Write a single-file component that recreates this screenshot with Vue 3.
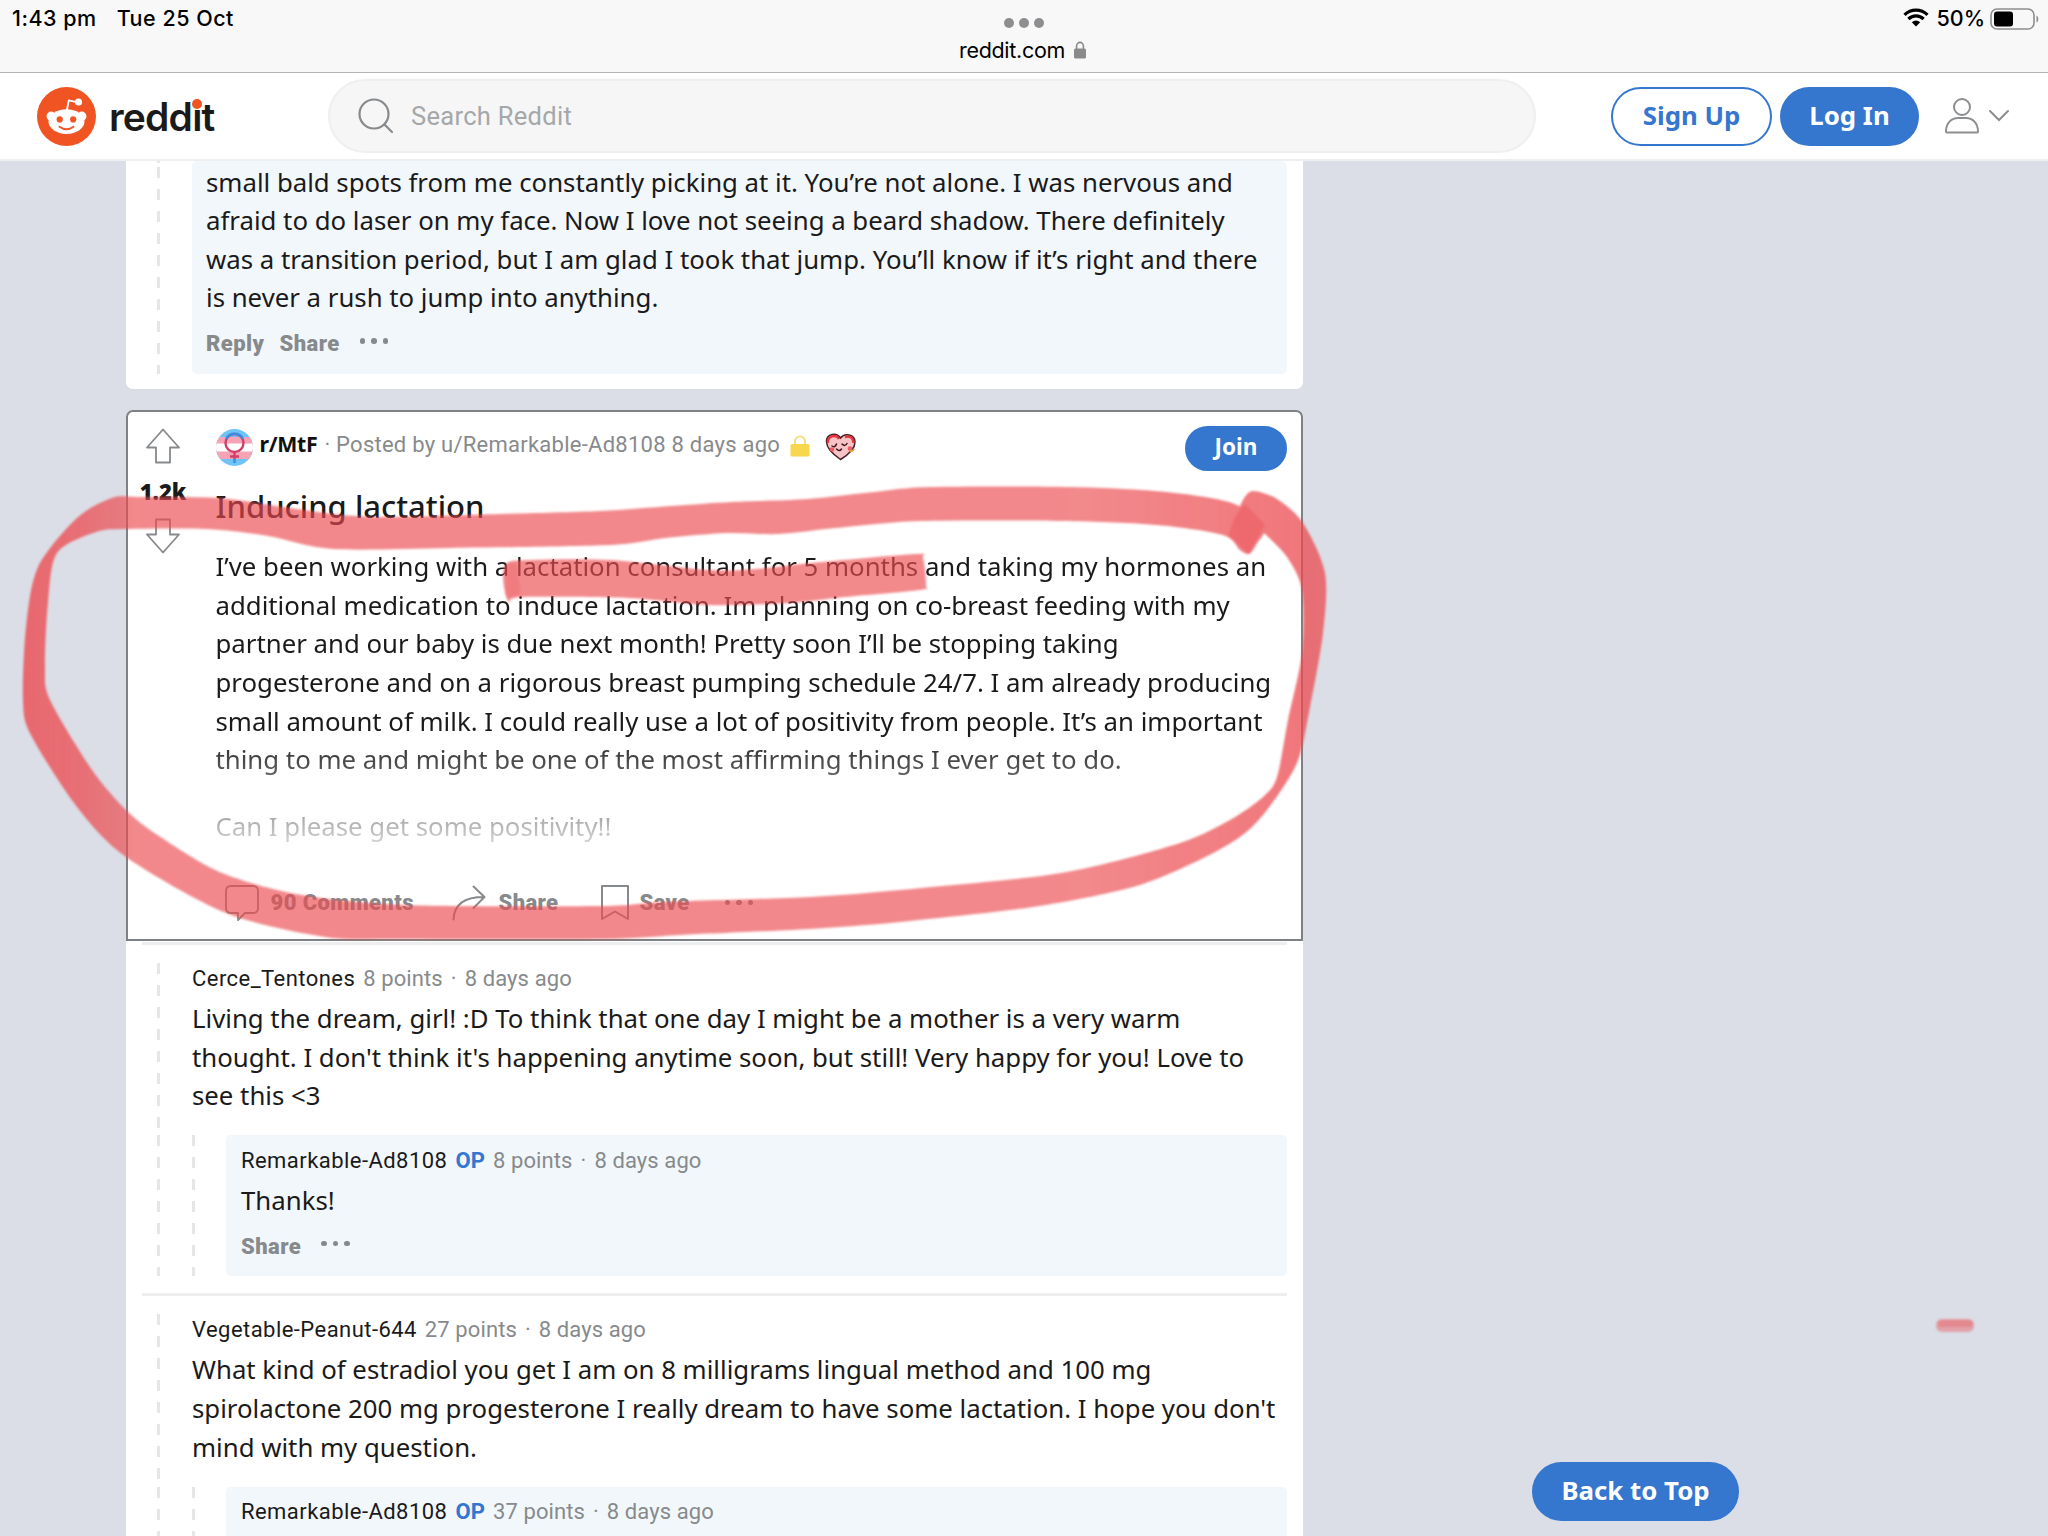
<script setup>
const topReply = [
  'small bald spots from me constantly picking at it. You’re not alone. I was nervous and',
  'afraid to do laser on my face. Now I love not seeing a beard shadow. There definitely',
  'was a transition period, but I am glad I took that jump. You’ll know if it’s right and there',
  'is never a rush to jump into anything.',
]

const postLines = [
  'I’ve been working with a lactation consultant for 5 months and taking my hormones an',
  'additional medication to induce lactation. Im planning on co-breast feeding with my',
  'partner and our baby is due next month! Pretty soon I’ll be stopping taking',
  'progesterone and on a rigorous breast pumping schedule 24/7. I am already producing',
  'small amount of milk. I could really use a lot of positivity from people. It’s an important',
  'thing to me and might be one of the most affirming things I ever get to do.',
]

const comments = [
  {
    author: 'Cerce_Tentones',
    points: '8 points',
    lines: [
      'Living the dream, girl! :D To think that one day I might be a mother is a very warm',
      "thought. I don't think it's happening anytime soon, but still! Very happy for you! Love to",
      'see this <3',
    ],
    reply: { points: '8 points', text: 'Thanks!' },
  },
  {
    author: 'Vegetable-Peanut-644',
    points: '27 points',
    lines: [
      'What kind of estradiol you get I am on 8 milligrams lingual method and 100 mg',
      "spirolactone 200 mg progesterone I really dream to have some lactation. I hope you don't",
      'mind with my question.',
    ],
    reply: { points: '37 points', text: '' },
  },
]

// marker strokes, as closed outlines in page coordinates
const loop = [
  [1265, 525], [1232, 503], [1166, 492], [1072, 487], [930, 487], [874, 492], [808, 499],
  [732, 502], [671, 506], [600, 511], [500, 514], [393, 517], [343, 515], [283, 507],
  [220, 498], [140, 497], [112, 498], [77, 518], [38, 567], [26, 627], [23, 700], [31, 735],
  [77, 807], [126, 857], [226, 913], [325, 937], [400, 939], [605, 939], [681, 935], [810, 929],
  [900, 922], [1033, 907], [1133, 887], [1193, 863], [1240, 837], [1267, 810], [1297, 763],
  [1310, 707], [1323, 633], [1325, 573], [1303, 523], [1277, 499], [1253, 491], [1243, 500],
  [1241, 512], [1264, 533], [1287, 557], [1302, 590], [1302, 653], [1288, 720], [1277, 777],
  [1263, 797], [1230, 820], [1183, 842], [1100, 865], [1033, 877], [900, 890], [810, 897],
  [663, 902], [601, 906], [405, 905], [302, 895], [222, 873], [159, 836], [126, 810],
  [92, 770], [50, 700], [45, 667], [48, 603], [57, 553], [96, 532], [126, 529], [207, 529],
  [268, 536], [333, 549], [450, 548], [610, 545], [666, 538], [727, 533], [779, 534],
  [836, 528], [921, 521], [1062, 521], [1157, 525], [1223, 535], [1240, 550], [1249, 554], [1256, 545],
]
const underline = [
  [507, 563], [530, 560], [610, 560], [708, 570], [756, 569], [812, 563], [915, 554],
  [923, 558], [926, 585], [920, 590], [845, 597], [789, 603], [708, 605], [628, 598],
  [520, 597], [510, 602], [506, 596], [503, 577],
]

// Catmull-Rom through the points, written out as cubic beziers
function smooth(points) {
  const n = points.length
  const at = (i) => points[(i + n) % n]
  let d = `M${points[0]}`
  for (let i = 0; i < n; i++) {
    const [p0, p1, p2, p3] = [at(i - 1), at(i), at(i + 1), at(i + 2)]
    const c1 = p1.map((v, k) => v + (p2[k] - p0[k]) / 7)
    const c2 = p2.map((v, k) => v - (p3[k] - p1[k]) / 7)
    d += `C${c1} ${c2} ${p2}`
  }
  return d + 'Z'
}
</script>

<template>
  <div class="page">
    <div class="status-bar">
      <div class="status-left"><span class="time">1:43 pm</span><span class="date">Tue 25 Oct</span></div>
      <div class="status-center">
        <div class="window-dots"><i></i><i></i><i></i></div>
        <div class="url">
          <span>reddit.com</span>
          <svg width="12" height="18" viewBox="0 0 12 18"><path d="M2.6 8V5a3.4 3.6 0 0 1 6.8 0v3" fill="none" stroke="#8a8a8a" stroke-width="1.6" /><rect y="7.5" width="12" height="10" rx="1.5" fill="#8a8a8a" /></svg>
        </div>
      </div>
      <div class="status-right">
        <svg width="26" height="19" viewBox="0 0 26 19">
          <path d="M1.5 6.8a16.5 16.5 0 0 1 23 0M5.4 11a10.8 10.8 0 0 1 15.2 0" fill="none" stroke="#000" stroke-width="3.2" />
          <path d="M8.8 14.3a6 6 0 0 1 8.4 0L13 18.6z" />
        </svg>
        <span class="percent">50%</span>
        <svg class="battery" width="49" height="22" viewBox="0 0 49 22">
          <rect x="1" y="1" width="43" height="20" rx="6" fill="none" stroke="#8d8d8d" stroke-width="1.6" />
          <rect x="4" y="3.5" width="19" height="15" rx="3" />
          <path d="M46.5 7.5c2.4 1 2.4 6 0 7z" fill="#8d8d8d" />
        </svg>
      </div>
    </div>

    <header class="header">
      <div class="logo">
        <svg width="59" height="59" viewBox="0 0 59 59">
          <circle cx="29.5" cy="29.5" r="29.5" fill="#f15423" />
          <path d="M29.5 25l2.3-11.6 9 2" fill="none" stroke="#fff" stroke-width="1.8" stroke-linejoin="round" />
          <circle cx="41.5" cy="15" r="3.6" fill="#fff" />
          <circle cx="14.2" cy="29.2" r="4.6" fill="#fff" />
          <circle cx="44.8" cy="29.2" r="4.6" fill="#fff" />
          <ellipse cx="29.5" cy="34.6" rx="18" ry="12.3" fill="#fff" />
          <circle cx="22.7" cy="32.4" r="3.1" fill="#f15423" />
          <circle cx="36.2" cy="32.4" r="3.1" fill="#f15423" />
          <path d="M22.5 39.8q7 5 14 0" fill="none" stroke="#f15423" stroke-width="2" stroke-linecap="round" />
        </svg>
        <span class="wordmark">redd<span class="dotted">i</span>t</span>
      </div>
      <div class="search">
        <svg width="38" height="38" viewBox="0 0 38 38" fill="none" stroke="#878a8c" stroke-width="2.2" stroke-linecap="round"><circle cx="17" cy="17" r="14.5" /><path d="M27.5 27.5L35 35" /></svg>
        <span>Search Reddit</span>
      </div>
      <div class="account">
        <button class="pill outline signup">Sign Up</button>
        <button class="pill login">Log In</button>
        <svg class="person" width="34" height="36" viewBox="0 0 34 36" fill="none" stroke="#8b8d8f" stroke-width="2"><circle cx="17" cy="9" r="8" /><path d="M1 33.5c0-9 6-13.5 12-13.5h8c6 0 12 4.5 12 13.5q0 1-1 1H2q-1 0-1-1z" /></svg>
        <svg width="20" height="12" viewBox="0 0 20 12" fill="none" stroke="#8b8d8f" stroke-width="2" stroke-linecap="round"><path d="M1 1l9 9 9-9" /></svg>
      </div>
    </header>

    <main class="feed">
      <section class="card first">
        <div class="rail outer"></div>
        <div class="highlight">
          <p v-for="line in topReply" :key="line" class="line">{{ line }}</p>
          <div class="actions"><b>Reply</b><b>Share</b><span class="dots"><i></i><i></i><i></i></span></div>
        </div>
      </section>

      <article class="post">
        <div class="votes">
          <svg width="34" height="36" viewBox="0 0 34 36" fill="none" stroke="#878a8c" stroke-width="1.8" stroke-linejoin="round"><path d="M17 1.5L33 19.5H24V34.5H10V19.5H1z" /></svg>
          <b>1.2k</b>
          <svg width="34" height="36" viewBox="0 0 34 36" fill="none" stroke="#878a8c" stroke-width="1.8" stroke-linejoin="round"><path d="M17 34.5L33 16.5H24V1.5H10V16.5H1z" /></svg>
        </div>
        <div class="post-main">
          <div class="post-head">
            <svg class="avatar" width="37" height="37" viewBox="0 0 37 37">
              <defs><clipPath id="avatar-clip"><circle cx="18.5" cy="18.5" r="18.5" /></clipPath></defs>
              <g clip-path="url(#avatar-clip)">
                <rect width="37" height="37" fill="#6fc3f7" />
                <rect y="8" width="37" height="22" fill="#f5a3b5" />
                <rect y="14.5" width="37" height="8" fill="#fff" />
              </g>
              <circle cx="18.5" cy="14" r="9" fill="none" stroke="#d0406a" stroke-width="2.4" />
              <path d="M10 10a9.5 9.5 0 0 1 17 0" fill="none" stroke="#3a8fe0" stroke-width="2.4" />
              <path d="M18.5 23v7M14 27.5h9" stroke="#d0406a" stroke-width="2.4" />
              <path d="M18.5 29.5v4.5" stroke="#3a8fe0" stroke-width="2.4" />
            </svg>
            <b class="sub">r/MtF</b>
            <span class="byline">· Posted by u/Remarkable-Ad8108 8 days ago</span>
            <svg class="lock" width="20" height="22" viewBox="0 0 20 22"><path d="M5 10V6.5a5 5 0 0 1 10 0V10" fill="none" stroke="#f5dc7c" stroke-width="2" /><rect x=".5" y="9" width="19" height="12.5" rx="1.5" fill="#f8d64e" /></svg>
            <svg class="award" width="32" height="28" viewBox="0 0 32 28">
              <path d="M15.5 26.5C9 22 1.5 15 1.5 8.5c0-8 10-9.5 14-3.5 4-5.5 14.5-4 14.5 4 0 7-8 13.5-14.5 17.5z" fill="#f8c3c6" stroke="#452024" stroke-width="1.5" />
              <path d="M3 10c-1-7 8-9.5 11-4M20 4q8-2 8.500 6" fill="none" stroke="#e8323c" stroke-width="2.4" />
              <path d="M7 13q3 2 4.500-2M17 11q3 3 5-.5M11.500 16q3 3 5 0" fill="none" stroke="#3a1518" stroke-width="1.5" stroke-linecap="round" />
              <circle cx="7" cy="16.5" r="2.3" fill="#ef5b60" /><circle cx="25" cy="15.5" r="2.3" fill="#ef5b60" />
              <path d="M25 18q3 1 4-2" stroke="#f2a43a" stroke-width="2" fill="none" />
            </svg>
            <button class="pill join">Join</button>
          </div>
          <h2>Inducing lactation</h2>
          <div class="post-body">
            <p v-for="line in postLines" :key="line" class="line">{{ line }}</p>
            <p class="line last">Can I please get some positivity!!</p>
          </div>
          <div class="toolbar">
            <svg width="34" height="36" viewBox="0 0 34 36" fill="none" stroke="#878a8c" stroke-width="1.8" stroke-linejoin="round"><path d="M6 1h22q5 0 5 5v17q0 5-5 5h-8l-7 7v-7H6q-5 0-5-5V6q0-5 5-5z" /></svg>
            <b class="t-comments">90 Comments</b>
            <svg width="34" height="36" viewBox="0 0 34 36" fill="none" stroke="#878a8c" stroke-width="2" stroke-linecap="round" stroke-linejoin="round"><path d="M1.500 34.500C2 20 12 12 32 12M21.500 1.500L32.500 12 21.500 23" /></svg>
            <b class="t-share">Share</b>
            <svg width="28" height="36" viewBox="0 0 28 36" fill="none" stroke="#878a8c" stroke-width="2" stroke-linejoin="round"><path d="M1 1H27V34L14 26.5 1 34z" /></svg>
            <b class="t-save">Save</b>
            <span class="dots"><i></i><i></i><i></i></span>
          </div>
        </div>
      </article>

      <section class="thread">
        <template v-for="comment in comments" :key="comment.author">
          <div class="divider"></div>
          <div class="comment">
            <div class="rail outer"></div>
            <div class="comment-main">
              <div class="meta"><span class="name">{{ comment.author }}</span><span>{{ comment.points }}</span><span>·</span><span>8 days ago</span></div>
              <p v-for="line in comment.lines" :key="line" class="line">{{ line }}</p>
            </div>
          </div>
          <div class="comment reply">
            <div class="rail outer"></div>
            <div class="rail inner"></div>
            <div class="highlight">
              <div class="meta"><span class="name">Remarkable-Ad8108</span><b class="op">OP</b><span>{{ comment.reply.points }}</span><span>·</span><span>8 days ago</span></div>
              <template v-if="comment.reply.text">
                <p class="line">{{ comment.reply.text }}</p>
                <div class="actions"><b>Share</b><span class="dots"><i></i><i></i><i></i></span></div>
              </template>
            </div>
          </div>
        </template>
      </section>
    </main>

    <button class="pill back-to-top">Back to Top</button>

    <svg class="marker" width="2048" height="1536" viewBox="0 0 2048 1536">
      <defs>
        <linearGradient id="ink" gradientUnits="userSpaceOnUse" x1="22" y1="0" x2="1327" y2="0">
          <stop offset="0" stop-color="#eb4b50" stop-opacity=".8" />
          <stop offset=".04" stop-color="#eb4b50" stop-opacity=".76" />
          <stop offset=".09" stop-color="#eb4b50" stop-opacity=".65" />
          <stop offset=".8" stop-color="#eb4b50" stop-opacity=".65" />
          <stop offset=".96" stop-color="#eb4b50" stop-opacity=".74" />
          <stop offset="1" stop-color="#eb4b50" stop-opacity=".76" />
        </linearGradient>
        <filter id="feather" x="-5%" y="-5%" width="110%" height="110%"><feGaussianBlur stdDeviation="1.2" /></filter>
      </defs>
      <g filter="url(#feather)">
        <path :d="smooth(loop)" fill="url(#ink)" />
        <path :d="smooth(underline)" fill="#eb4b50" fill-opacity=".65" />
        <path d="M1245 504L1265 525 1249 554 1229 536q3-20 16-32z" fill="#eb4b50" fill-opacity=".4" />
        <path d="M507 563l10 0 4 30-11 9-5-8z" fill="#eb4b50" fill-opacity=".22" />
        <rect x="1936" y="1319" width="38" height="13" rx="6" fill="#e8666c" fill-opacity=".5" />
        <rect x="1938" y="1320" width="35" height="7" rx="3" fill="#e8666c" fill-opacity=".4" />
      </g>
    </svg>
  </div>
</template>

<style>
body {
  margin: 0;
  background: #dbdee6;
}
</style>

<style scoped>
.page {
  position: relative;
  width: 2048px;
  height: 1536px;
  overflow: hidden;
  background: #dbdee6;
  font-family: 'Noto Sans', sans-serif;
  color: #1a1a1b;
  display: flex;
  flex-direction: column;
}
p, h2 {
  margin: 0;
}
svg {
  display: block;
  flex: none;
}
.status-bar {
  height: 73px;
  flex: none;
  display: grid;
  grid-template-columns: 1fr auto 1fr;
  box-sizing: border-box;
  background: #f8f8f9;
  font: 500 21.5px/30px Inter, sans-serif;
  color: #000;
  border-bottom: 1px solid #b5b5b7;
  white-space: nowrap;
}
.status-left {
  padding: 3px 0 0 12px;
  display: flex;
  gap: 20px;
  letter-spacing: .5px;
}
.status-center {
  display: flex;
  flex-direction: column;
  align-items: center;
}
.window-dots {
  display: flex;
  gap: 5px;
  margin-top: 18px;
}
.window-dots i {
  width: 10px;
  height: 10px;
  border-radius: 50%;
  background: #8e8e90;
}
.url {
  display: flex;
  align-items: center;
  gap: 9px;
  margin: 7px 3px 0 0;
  font-weight: 400;
  letter-spacing: -.3px;
}
.status-right {
  display: flex;
  justify-content: flex-end;
  align-items: flex-start;
  padding: 8px 9px 0 0;
}
.percent {
  margin: -5px 5px 0 7px;
}
.header {
  height: 88px;
  flex: none;
  display: flex;
  align-items: center;
  background: #fff;
  border-bottom: 2px solid #edeff1;
  box-sizing: border-box;
}
.logo {
  display: flex;
  align-items: center;
  gap: 13px;
  width: 291px;
  padding-left: 37px;
}
.wordmark {
  font: 600 39px/50px Inter, sans-serif;
  letter-spacing: -.8px;
  padding-top: 2px;
}
.dotted {
  position: relative;
}
.dotted::after {
  content: '';
  position: absolute;
  left: 0;
  top: 6px;
  width: 10px;
  height: 10px;
  border-radius: 50%;
  background: #f15423;
}
.search {
  width: 1208px;
  height: 74px;
  box-sizing: border-box;
  border: 2px solid #eeeff0;
  border-radius: 37px;
  background: #f6f6f7;
  display: flex;
  align-items: center;
  gap: 16px;
  padding-left: 27px;
  font: 25.5px/36px Roboto, sans-serif;
  letter-spacing: .3px;
  color: #a5a7a9;
}
.account {
  display: flex;
  align-items: center;
  margin-left: 75px;
}
.pill {
  border: 2px solid #3576cf;
  border-radius: 40px;
  background: #3576cf;
  color: #fff;
  font: 700 25.8px/34px 'Noto Sans', sans-serif;
  height: 59px;
  padding: 0 0 3px;
  box-sizing: border-box;
}
.outline {
  background: #fff;
  color: #3576cf;
}
.signup {
  width: 161px;
}
.login {
  width: 139px;
  margin-left: 8px;
}
.person {
  margin: 0 10px 0 26px;
}
.feed {
  width: 1177px;
  margin-left: 126px;
}
.line {
  font-size: 25.77px;
  line-height: 38.65px;
  white-space: nowrap;
}
.card {
  height: 228px;
  display: flex;
  background: #fff;
  border-radius: 0 0 7px 7px;
  padding: 0 16px 15px 31px;
  box-sizing: border-box;
}
.rail {
  width: 3px;
  flex: none;
  background: repeating-linear-gradient(to bottom, #e4e6e8 0 11px, transparent 11px 22px);
}
.first .rail {
  background-position-y: 6px;
}
.highlight {
  background: #f2f7fc;
  border-radius: 5px;
}
.first .highlight {
  flex: 1;
  margin-left: 32px;
  padding: 1.5px 0 0 14px;
  box-sizing: border-box;
}
.actions {
  display: flex;
  gap: 15px;
  font: 700 22px/32px Roboto, sans-serif;
  letter-spacing: .45px;
  color: #878a8c;
  margin-top: 11px;
}
.dots {
  display: flex;
  gap: 6px;
  margin: 10px 0 0 5px;
}
.dots i {
  width: 5.5px;
  height: 5.5px;
  border-radius: 50%;
  background: #878a8c;
}
.post {
  display: flex;
  height: 531px;
  margin-top: 21px;
  box-sizing: border-box;
  background: #fff;
  border: 2px solid #7e8183;
  border-radius: 7px 7px 0 0;
}
.votes {
  width: 70px;
  padding-top: 16px;
  box-sizing: border-box;
  display: flex;
  flex-direction: column;
  align-items: center;
  font: 700 22px/30px 'Noto Sans', sans-serif;
}
.votes b {
  margin: 12px 0;
}
.post-main {
  flex: 1;
  padding: 14px 14px 0 17.5px;
}
.post-head {
  height: 45px;
  display: flex;
  align-items: center;
  font: 22px/30px Roboto, sans-serif;
  white-space: nowrap;
}
.post-head .avatar {
  margin: -3px 7px 0 0;
}
.sub {
  color: #111;
  font: 700 21.3px/30px 'Noto Sans', sans-serif;
  letter-spacing: -.3px;
  margin: -9px 7px 0 0;
}
.byline {
  color: #878a8c;
  letter-spacing: .25px;
  margin-top: -8px;
}
.lock {
  margin: -6px 15px 0 10px;
}
.award {
  margin-top: -4px;
}
.join {
  width: 102px;
  height: 45px;
  margin-left: auto;
  font-size: 22.5px;
  line-height: 30px;
}
h2 {
  font: 500 31px/44px 'Noto Sans', sans-serif;
  margin-top: 13px;
  padding-bottom: 19px;
}
.post-body {
  height: 320px;
  -webkit-mask-image: linear-gradient(to bottom, #000 186px, transparent 322px);
  mask-image: linear-gradient(to bottom, #000 186px, transparent 322px);
}
.last {
  margin-top: 28px;
}
.toolbar {
  display: flex;
  align-items: center;
  margin-left: 9px;
  margin-top: 17.5px;
  font: 700 22px/32px Roboto, sans-serif;
  letter-spacing: .4px;
  color: #878a8c;
}
.t-comments {
  width: 181px;
  margin-left: 12px;
}
.t-share {
  width: 102px;
  margin-left: 13px;
}
.t-save {
  width: 80px;
  margin-left: 11px;
}
.toolbar .dots {
  margin-top: 0;
}
.thread {
  background: #fff;
  padding: 1px 16px 0;
}
.divider {
  height: 3px;
  background: #edeeef;
}
.comment {
  display: flex;
  padding-left: 15px;
  padding-top: 18px;
}
.comment-main {
  margin-left: 32px;
  padding-bottom: 20.5px;
}
.meta {
  display: flex;
  gap: 8px;
  font: 22px/32px Roboto, sans-serif;
  letter-spacing: .1px;
  color: #878a8c;
  padding-bottom: 4px;
}
.name {
  color: #1a1a1b;
  letter-spacing: .45px;
}
.op {
  color: #3576cf;
}
.comment.reply {
  padding-top: 0;
  padding-bottom: 17px;
}
.inner {
  margin-left: 32px;
}
.reply .highlight {
  flex: 1;
  height: 141px;
  box-sizing: border-box;
  margin-left: 31px;
  padding: 9.5px 0 0 15px;
}
.back-to-top {
  position: absolute;
  left: 1532px;
  top: 1462px;
  width: 207px;
}
.marker {
  position: absolute;
  left: 0;
  top: 0;
}
</style>
